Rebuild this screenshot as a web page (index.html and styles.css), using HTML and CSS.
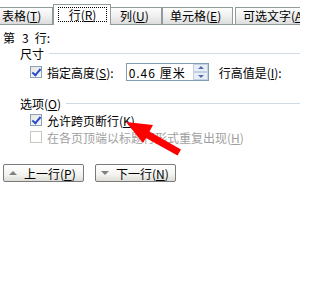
FILE: index.html
```html
<!DOCTYPE html>
<html>
<head>
<meta charset="utf-8">
<link rel="stylesheet" href="styles.css">
</head>
<body>
<div class="page">
  <div class="tabs">
    <div class="tab t1">表格(<u>T</u>)</div>
    <div class="tab sel"><span class="focus">行(<u>R</u>)</span></div>
    <div class="tab t3">列(<u>U</u>)</div>
    <div class="tab t4">单元格(<u>E</u>)</div>
    <div class="tab t5">可选文字(<u>A</u>)</div>
  </div>
  <div class="content">
    <div class="rowno">第<span class="num">3</span>行:</div>
    <div class="group"><span>尺寸</span><i class="line"></i></div>
    <div class="line-row">
      <span class="cb on"></span>
      <span class="lbl">指定高度(<u>S</u>):</span>
      <span class="input"><span class="val">0.46 厘米</span><span class="spin"><b class="up"></b><b class="dn"></b></span></span>
      <span class="lbl2">行高值是(<u>I</u>):</span>
    </div>
    <div class="group g2"><span>选项(<u>O</u>)</span><i class="line"></i></div>
    <div class="line-row r2">
      <span class="cb on"></span>
      <span class="lbl">允许跨页断行(<u>K</u>)</span>
    </div>
    <div class="line-row r3">
      <span class="cb dis"></span>
      <span class="lbl gray">在各页顶端以标题行形式重复出现(<u>H</u>)</span>
    </div>
    <div class="btns">
      <span class="btn"><i class="tri up"></i>上一行(<u>P</u>)</span>
      <span class="btn"><i class="tri dn"></i>下一行(<u>N</u>)</span>
    </div>
  </div>
  <svg class="arrow" width="300" height="300" viewBox="0 0 300 300">
    <polygon points="126,122 153,125 149.5,131.6 181,149.5 177.5,155.5 146,138 143,143" fill="#ff0000"/>
  </svg>
</div>
</body>
</html>
```
FILE: styles.css
```css
html, body { margin: 0; padding: 0; background: #fff; }
body {
  font-family: "Noto Sans CJK SC", "Liberation Sans", sans-serif;
  font-size: 12px;
  color: #000;
  width: 300px;
  height: 300px;
  overflow: hidden;
}
u { text-decoration: underline; }
.page { position: relative; width: 300px; height: 300px; }
.tabs {
  display: flex;
  align-items: flex-end;
  height: 24px;
  border-bottom: 1px solid #919b9c;
  margin-left: -3px;
  white-space: nowrap;
}
.tab {
  box-sizing: border-box;
  height: 17px;
  line-height: 15px;
  border: 1px solid #919b9c;
  border-bottom: none;
  background: linear-gradient(#fdfdfd, #f0f0f0 50%, #dddddd);
  padding: 0 3px;
  flex: none;
}
.t1 { width: 56px; padding-left: 4px; }
.sel {
  width: 58px;
  height: 21px;
  margin-bottom: -1px;
  background: #fff;
  padding: 2px 0 0 4px;
  line-height: 14px;
}
.focus {
  display: inline-block;
  box-sizing: border-box;
  width: 49px;
  height: 15px;
  border: 1px dotted #000;
  text-align: center;
  line-height: 13px;
}
.t3 { width: 52px; padding-left: 9px; margin-left: -1px; }
.t4 { width: 71px; padding-left: 7px; }
.t5 { width: 80px; padding-left: 7px; margin-left: 2px; }
.content { padding: 0 0 0 3px; }
.rowno { margin-top: 6px; height: 14px; line-height: 14px; }
.num { margin: 0 6px 0 7px; }
.group {
  display: flex;
  align-items: center;
  padding-left: 17px;
  height: 16px;
}
.group .line { flex: 1; height: 1px; background: #d0dbe6; margin-left: 5px; }
.g2 { margin-top: 14px; }
.line-row {
  display: flex;
  align-items: center;
  height: 18px;
  margin-top: 2px;
  padding-left: 27px;
  white-space: nowrap;
}
.r2 { margin-top: 0px; }
.r3 { margin-top: -1px; }
.cb {
  box-sizing: border-box;
  width: 12px;
  height: 12px;
  border: 1px solid #8aa0b8;
  background: linear-gradient(135deg, #e6e6e0, #fafafa);
  position: relative;
  flex: none;
}
.cb.on::after {
  content: "";
  position: absolute;
  left: 3px;
  top: 0px;
  width: 3px;
  height: 7px;
  border: solid #2a4fc8;
  border-width: 0 2px 2px 0;
  transform: rotate(40deg);
}
.cb.dis { border-color: #c9c7ba; background: #fff; }
.lbl { margin-left: 5px; }
.gray { color: #a0a0a0; }
.input {
  box-sizing: border-box;
  display: flex;
  align-items: center;
  width: 83px;
  height: 18px;
  border: 1px solid #7f9db9;
  margin-left: 12px;
  padding-left: 2px;
}
.val { flex: 1; letter-spacing: 1px; }
.spin {
  display: flex;
  flex-direction: column;
  width: 15px;
  height: 16px;
}
.spin b {
  flex: 1;
  background: #e9eef6;
  border: 1px solid #c5d0e3;
  position: relative;
}
.spin b::after {
  content: "";
  position: absolute;
  left: 4px;
  width: 0; height: 0;
  border-left: 3px solid transparent;
  border-right: 3px solid transparent;
}
.spin .up::after { top: 1px; border-bottom: 3px solid #4d6fb0; }
.spin .dn::after { top: 2px; border-top: 3px solid #4d6fb0; }
.lbl2 { margin-left: 10px; }
.btns {
  display: flex;
  gap: 11px;
  margin-top: 18px;
}
.btn {
  box-sizing: border-box;
  display: flex;
  align-items: center;
  width: 81px;
  height: 18px;
  border: 1px solid #7a7a7a;
  border-radius: 2px;
  background: linear-gradient(#ffffff, #f3f3f0 60%, #dedcd6);
  padding-left: 5px;
  white-space: nowrap;
}
.tri {
  width: 0; height: 0;
  border-left: 4px solid transparent;
  border-right: 4px solid transparent;
  margin-right: 7px;
}
.tri.up { border-bottom: 4px solid #808080; }
.tri.dn { border-top: 4px solid #808080; }
.arrow { position: absolute; left: 0; top: 0; pointer-events: none; }
```
